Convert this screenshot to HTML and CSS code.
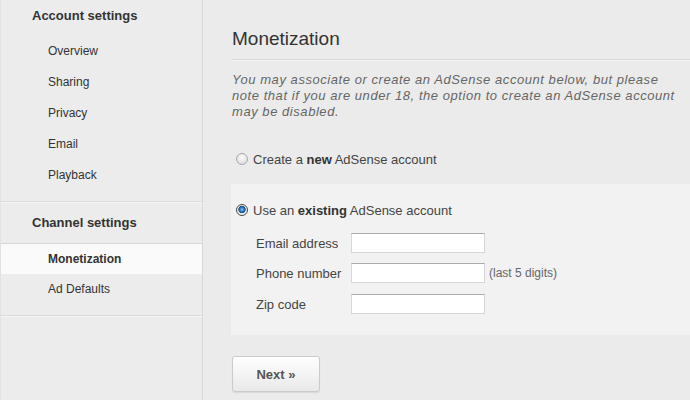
FILE: index.html
```html
<!DOCTYPE html>
<html>
<head>
<meta charset="utf-8">
<link rel="stylesheet" href="styles.css">
</head>
<body>
<div class="page">
  <nav class="sidebar">
    <div class="nav-section first">
      <div class="nav-heading">Account settings</div>
      <ul class="nav-list">
        <li class="nav-item">Overview</li>
        <li class="nav-item">Sharing</li>
        <li class="nav-item">Privacy</li>
        <li class="nav-item">Email</li>
        <li class="nav-item">Playback</li>
      </ul>
    </div>
    <div class="nav-section second">
      <div class="nav-heading">Channel settings</div>
      <ul class="nav-list">
        <li class="nav-item selected">Monetization</li>
        <li class="nav-item">Ad Defaults</li>
      </ul>
    </div>
  </nav>
  <main class="main">
    <h1 class="title">Monetization</h1>
    <p class="intro">You may associate or create an AdSense account below, but please note that if you are under 18, the option to create an AdSense account may be disabled.</p>
    <div class="radio-row outer">
      <span class="radio"></span>
      <span class="radio-label">Create a <b>new</b> AdSense account</span>
    </div>
    <div class="panel">
      <div class="radio-row">
        <span class="radio checked"></span>
        <span class="radio-label">Use an <b>existing</b> AdSense account</span>
      </div>
      <div class="fields">
        <div class="field">
          <span class="field-label">Email address</span>
          <span class="input"></span>
        </div>
        <div class="field">
          <span class="field-label">Phone number</span>
          <span class="input"></span>
          <span class="hint">(last 5 digits)</span>
        </div>
        <div class="field">
          <span class="field-label">Zip code</span>
          <span class="input"></span>
        </div>
      </div>
    </div>
    <div class="actions">
      <span class="button">Next »</span>
    </div>
  </main>
</div>
</body>
</html>
```

FILE: styles.css
```css
html, body {
  margin: 0;
  padding: 0;
}
body {
  width: 690px;
  height: 400px;
  overflow: hidden;
  background: #ebebeb;
  font-family: "Liberation Sans", Arial, sans-serif;
  color: #333;
}
.page {
  display: flex;
  height: 400px;
}
.sidebar {
  width: 201px;
  flex: none;
  border-left: 1px solid #e2e2e2;
  border-right: 1px solid #d8d8d8;
  background: #ececec;
}
.nav-section {
  border-bottom: 1px solid #dadada;
  box-shadow: 0 1px 0 #f6f6f6;
}
.nav-section.first {
  padding-bottom: 10px;
}
.nav-section.second {
  padding-top: 4px;
  padding-bottom: 10px;
  margin-top: 1px;
}
.nav-heading {
  height: 32px;
  line-height: 32px;
  padding-left: 31px;
  font-size: 13px;
  font-weight: bold;
  color: #333;
}
.nav-list {
  list-style: none;
  margin: 4px 0 0;
  padding: 0;
}
.nav-item {
  height: 31px;
  line-height: 31px;
  padding-left: 47px;
  font-size: 12px;
  color: #333;
}
.nav-item.selected {
  height: 30px;
  line-height: 30px;
  border-top: 1px solid #d6d6d6;
  background: #fafafa;
  font-weight: bold;
}
.main {
  flex: 1;
  padding-left: 29px;
}
.title {
  margin: 27px 0 0;
  font-size: 19px;
  line-height: 23px;
  font-weight: normal;
  color: #333;
  padding-bottom: 9px;
  border-bottom: 1px solid #d6d6d6;
  box-shadow: 0 1px 0 #f4f4f4;
}
.intro {
  margin: 12px 0 0;
  font-size: 13px;
  line-height: 16px;
  font-style: italic;
  letter-spacing: 0.55px;
  color: #666;
  width: 445px;
}
.radio-row {
  display: flex;
  align-items: center;
  height: 20px;
  gap: 5px;
  font-size: 13px;
  color: #444;
}
.radio-row.outer {
  margin-top: 29px;
  padding-left: 4px;
}
.radio-row b {
  color: #333;
}
.radio {
  width: 10px;
  height: 10px;
  border-radius: 50%;
  border: 1px solid #a9a9a9;
  background: radial-gradient(circle at 50% 35%, #fbfbfb 0, #e6e6e6 60%, #d4d4d4 100%);
  flex: none;
}
.radio.checked {
  border-color: #4a4a4a;
  background: radial-gradient(circle at 50% 45%, #8fc4f0 0, #2b78c2 28%, #1b4f86 45%, #f4f4f4 55%, #dcdcdc 100%);
}
.panel {
  margin: 15px 0 0 -1px;
  padding: 16px 0 21px 5px;
  background: #f2f2f2;
}
.fields {
  display: flex;
  flex-direction: column;
  gap: 10px;
  margin: 13px 0 0 20px;
}
.field {
  display: flex;
  align-items: center;
  height: 20px;
  font-size: 13px;
  color: #444;
}
.field:last-child {
  margin-top: 1px;
}
.field-label {
  width: 95px;
  flex: none;
}
.input {
  width: 132px;
  height: 18px;
  background: #fff;
  border: 1px solid #d6d6d6;
  border-top-color: #ababab;
  flex: none;
}
.hint {
  margin-left: 4px;
  font-size: 12px;
  color: #666;
}
.actions {
  margin-top: 21px;
}
.button {
  display: inline-flex;
  align-items: center;
  justify-content: center;
  box-sizing: border-box;
  width: 88px;
  height: 36px;
  border: 1px solid #cbcbcb;
  border-radius: 3px;
  background: linear-gradient(#fefefe, #e9e9e9);
  box-shadow: 0 1px 1px rgba(0, 0, 0, 0.08);
  font-size: 13px;
  font-weight: bold;
  color: #555;
}
```
